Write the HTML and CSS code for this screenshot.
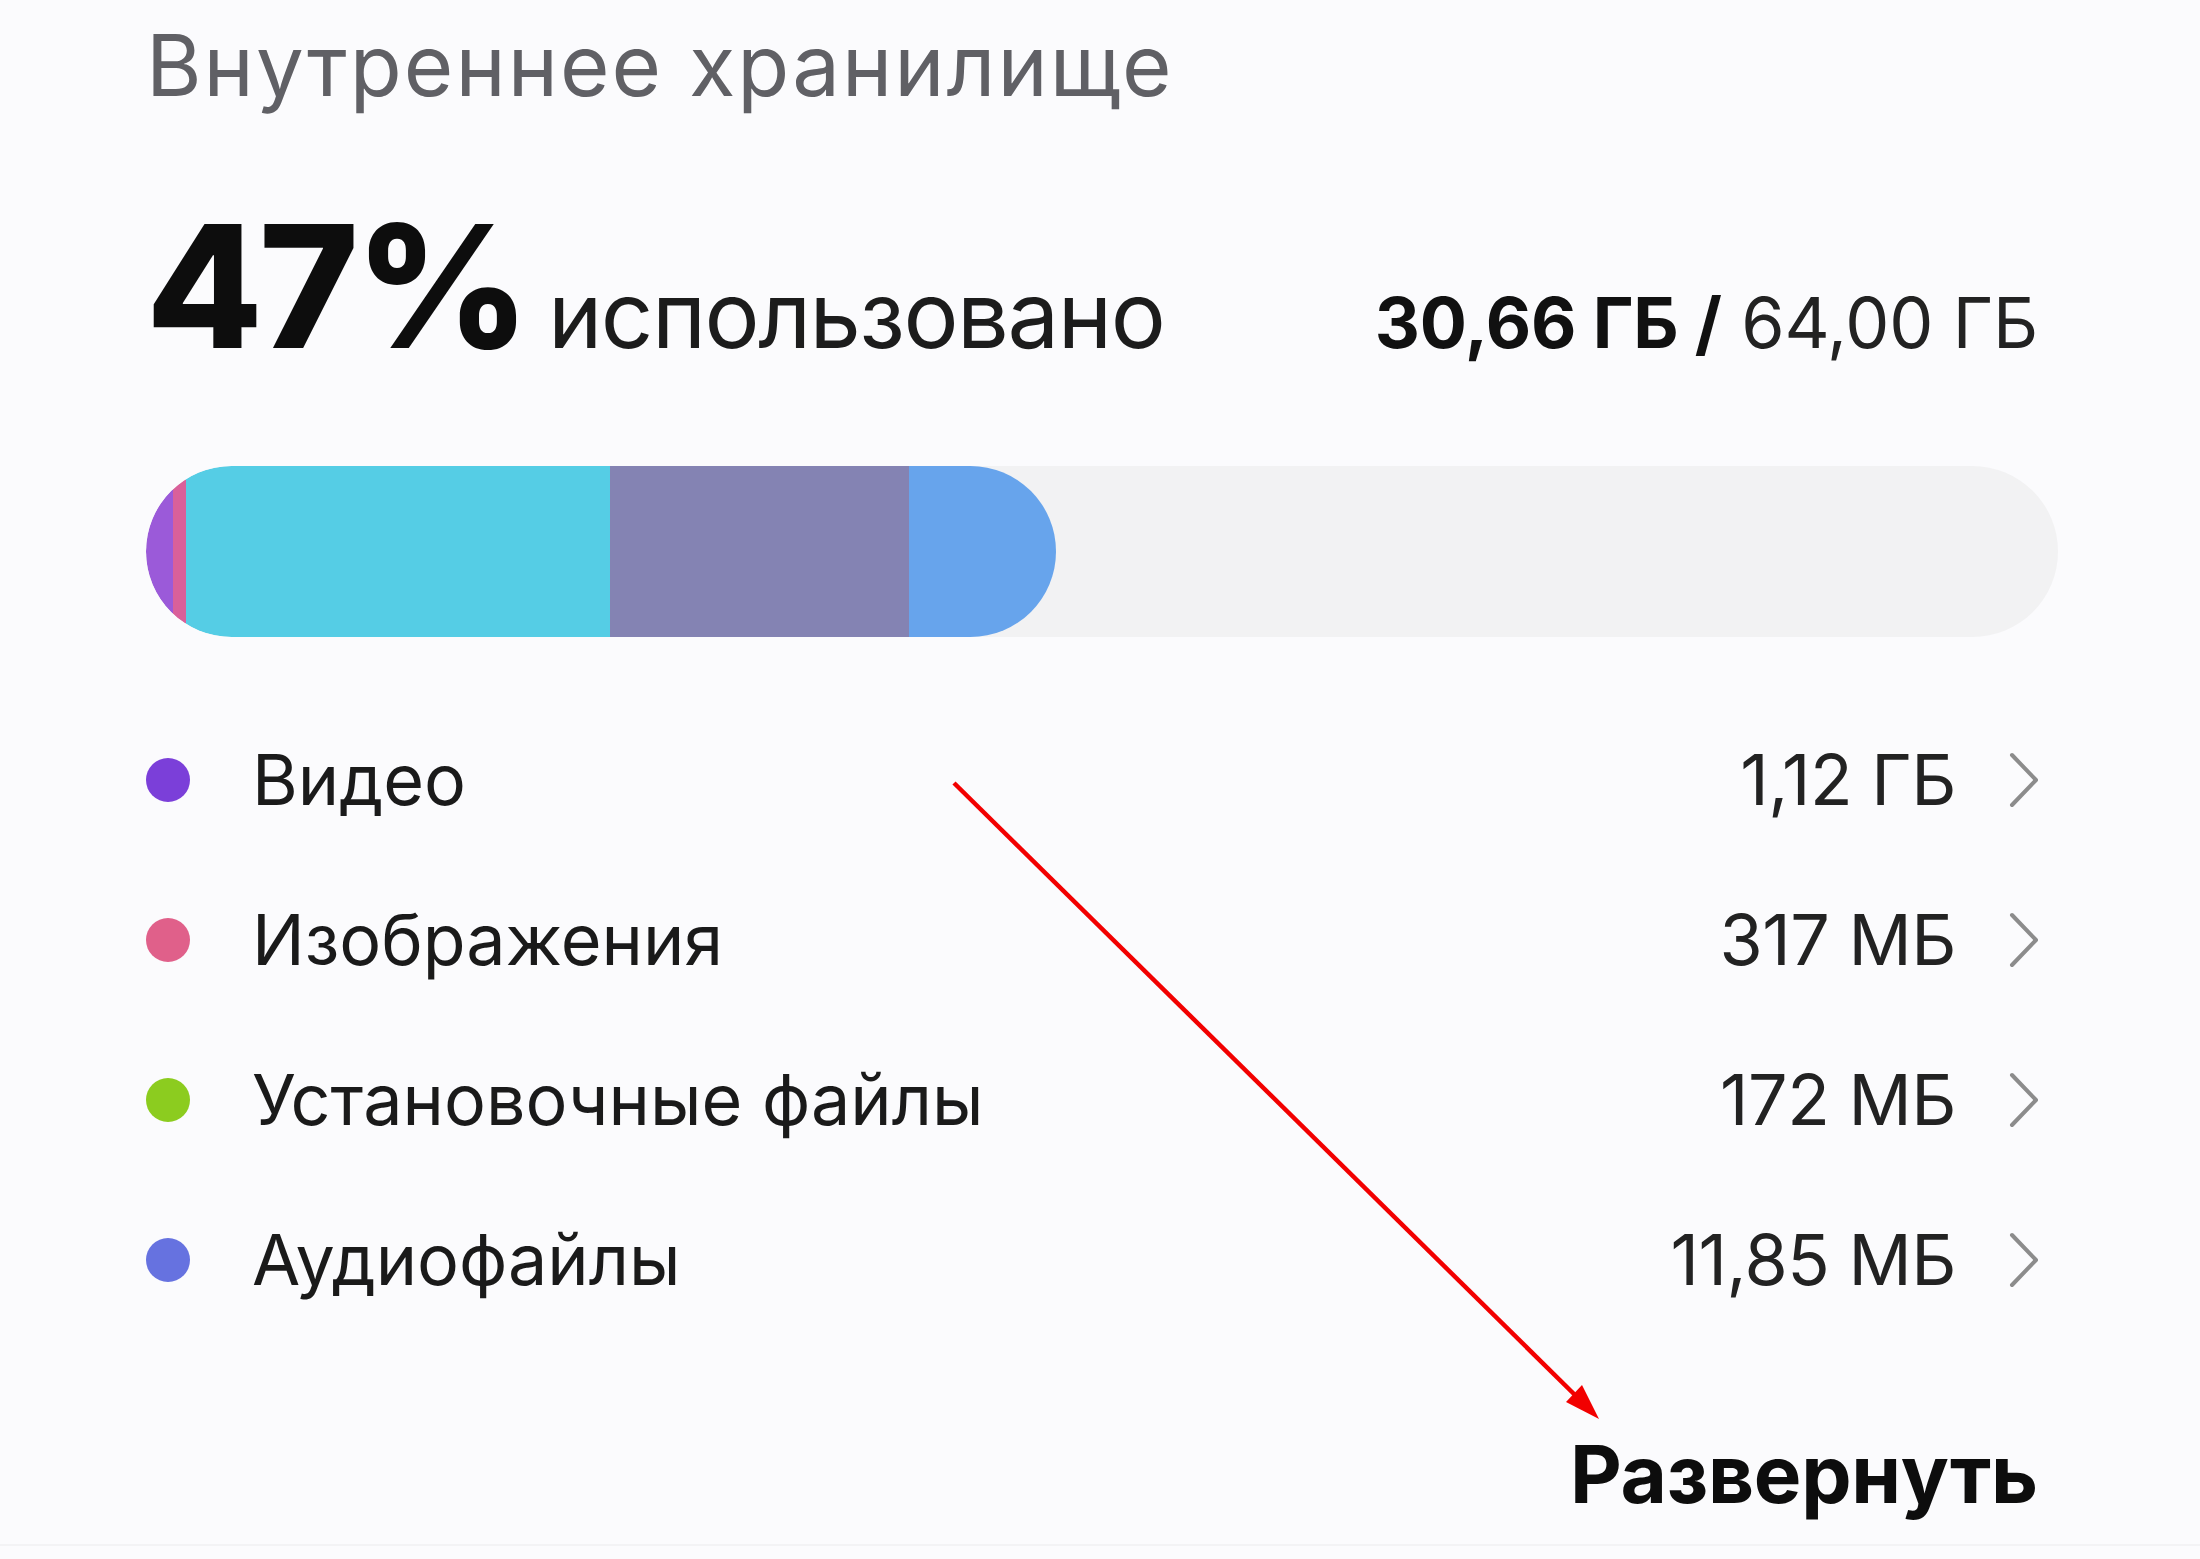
FILE: index.html
```html
<!DOCTYPE html>
<html lang="ru">
<head>
  <meta charset="UTF-8">
  <title>Внутреннее хранилище</title>
  <link rel="stylesheet" href="styles.css">
</head>
<body>
  <div class="storage-page">
    <div class="storage-title">Внутреннее хранилище</div>

    <div class="storage-summary">
      <div class="storage-used">
        <span class="percent">47%</span>
        <span class="used-label">использовано</span>
      </div>
      <div class="storage-total">
        <b>30,66 ГБ /</b> 64,00 ГБ
      </div>
    </div>

    <div class="storage-bar">
      <div class="storage-fill" style="width: 47.6%;">
        <span class="seg seg-video" style="width: 3%;"></span>
        <span class="seg seg-images" style="width: 1.4%;"></span>
        <span class="seg seg-apps" style="width: 46.6%;"></span>
        <span class="seg seg-system" style="width: 32.8%;"></span>
        <span class="seg seg-other" style="width: 16.2%;"></span>
      </div>
    </div>

    <ul class="storage-list">
      <li class="storage-item">
        <span class="dot dot-video"></span>
        <span class="item-name">Видео</span>
        <span class="item-size">1,12 ГБ</span>
        <svg class="chevron" viewBox="0 0 32 58"><path d="M4 4 L28 29 L4 54"/></svg>
      </li>
      <li class="storage-item">
        <span class="dot dot-images"></span>
        <span class="item-name">Изображения</span>
        <span class="item-size">317 МБ</span>
        <svg class="chevron" viewBox="0 0 32 58"><path d="M4 4 L28 29 L4 54"/></svg>
      </li>
      <li class="storage-item">
        <span class="dot dot-apk"></span>
        <span class="item-name">Установочные файлы</span>
        <span class="item-size">172 МБ</span>
        <svg class="chevron" viewBox="0 0 32 58"><path d="M4 4 L28 29 L4 54"/></svg>
      </li>
      <li class="storage-item">
        <span class="dot dot-audio"></span>
        <span class="item-name">Аудиофайлы</span>
        <span class="item-size">11,85 МБ</span>
        <svg class="chevron" viewBox="0 0 32 58"><path d="M4 4 L28 29 L4 54"/></svg>
      </li>
    </ul>

    <div class="storage-more">
      <span class="more-link">Развернуть</span>
    </div>

    <div class="storage-divider"></div>
  </div>

  <!-- annotation arrow drawn over the screenshot -->
  <svg class="annotation" viewBox="0 0 2200 1559">
    <line x1="954" y1="783" x2="1575" y2="1395" />
    <polygon points="1599,1419 1566,1402 1582,1385" />
  </svg>
</body>
</html>
```

FILE: styles.css
```css
html, body {
  margin: 0;
  padding: 0;
  width: 100%;
  height: 100%;
  overflow: hidden;
}

body {
  background-color: #fbfbfd;
  font-family: Inter, "Noto Sans", sans-serif;
  color: #1a1a1a;
  position: relative;
}

.storage-page {
  width: 1912px;
  padding: 16px 0 0 146px;
}

.storage-title {
  font-size: 85px;
  line-height: 100px;
  color: #606065;
  letter-spacing: 2px;
}

.storage-summary {
  display: flex;
  align-items: baseline;
  justify-content: space-between;
  margin-top: 85px;
  padding-right: 20px;
}

.storage-used {
  display: flex;
  align-items: baseline;
  gap: 22px;
}

.percent {
  font-size: 170px;
  line-height: 170px;
  font-weight: 800;
  color: #0d0d0d;
  letter-spacing: -4px;
}

.used-label {
  font-size: 92px;
  color: #1c1c1c;
  letter-spacing: -1.5px;
}

.storage-total {
  font-size: 70px;
  color: #222;
  letter-spacing: -0.2px;
}

.storage-total b {
  font-weight: 700;
  color: #111;
}

.storage-bar {
  margin-top: 95px;
  height: 171px;
  border-radius: 86px;
  background-color: #f2f2f3;
  overflow: hidden;
}

.storage-fill {
  display: flex;
  height: 100%;
  border-radius: 86px;
  overflow: hidden;
}

.seg {
  display: block;
  height: 100%;
}

.seg-video { background-color: #9b5ad9; }
.seg-images { background-color: #d9609a; }
.seg-apps { background-color: #55cde5; }
.seg-system { background-color: #8483b3; }
.seg-other { background-color: #67a4ec; }

.storage-list {
  list-style: none;
  margin: 63px 0 0;
  padding: 0;
}

.storage-item {
  display: flex;
  align-items: center;
  height: 160px;
  padding-right: 18px;
}

.dot {
  width: 44px;
  height: 44px;
  border-radius: 50%;
  margin-right: 62px;
  flex-shrink: 0;
}

.dot-video { background-color: #7b3fd9; }
.dot-images { background-color: #e0608a; }
.dot-apk { background-color: #8ccc1f; }
.dot-audio { background-color: #6672e0; }

.item-name,
.item-size {
  font-size: 70px;
  line-height: 84px;
  letter-spacing: 0;
  color: #1a1a1a;
}

.item-name {
  flex: 1;
}

.item-size {
  color: #222;
  letter-spacing: -0.5px;
}

.chevron {
  width: 32px;
  height: 58px;
  margin-left: 52px;
  fill: none;
  stroke: #8c8c8c;
  stroke-width: 4;
  stroke-linecap: round;
  stroke-linejoin: round;
}

.storage-more {
  display: flex;
  justify-content: flex-end;
  margin-top: 84px;
  padding-right: 20px;
}

.more-link {
  font-size: 80px;
  line-height: 100px;
  font-weight: 700;
  color: #0d0d0d;
  letter-spacing: -0.3px;
}

.storage-divider {
  margin-top: 20px;
  margin-left: -146px;
  width: 2200px;
  border-top: 2px solid #f3f3f5;
}

.annotation {
  position: absolute;
  top: 0;
  left: 0;
  width: 2200px;
  height: 1559px;
  pointer-events: none;
}

.annotation line {
  stroke: #f20000;
  stroke-width: 4.5;
}

.annotation polygon {
  fill: #f20000;
}
```
